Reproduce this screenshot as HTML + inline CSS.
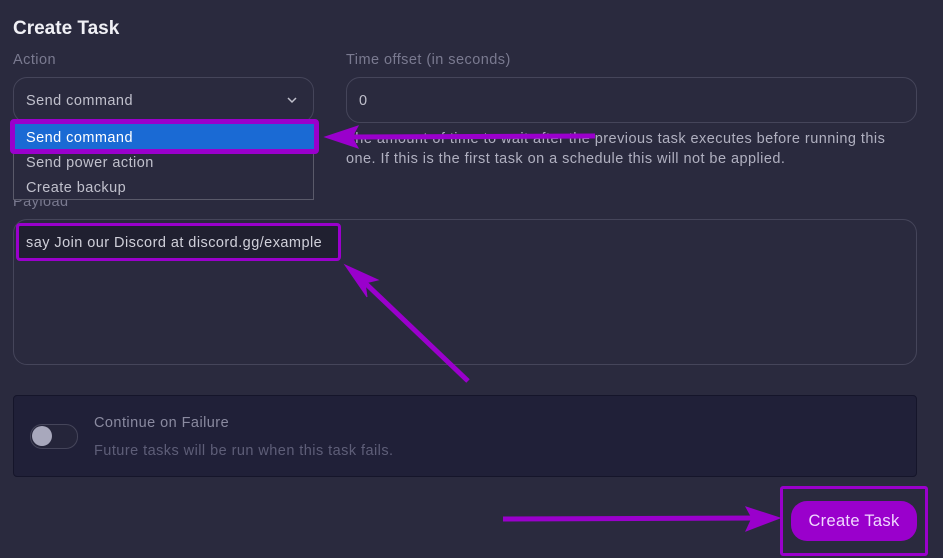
<!DOCTYPE html>
<html><head><style>
body{margin:0;width:943px;height:558px;background:#2a2a3e;font-family:"Liberation Sans",sans-serif;position:relative;overflow:hidden;color:#c8c8d4}
.a{position:absolute}
.t{font-size:14.5px;letter-spacing:0.45px}
.lbl{color:#7a7a90}
.inp{border:1px solid #45455a;border-radius:14px;box-sizing:border-box}
</style></head><body>
<div class="a" style="left:13px;top:18px;font-size:19px;font-weight:bold;color:#f0f0f5">Create Task</div>
<div class="a t lbl" style="left:13px;top:52px">Action</div>
<div class="a t lbl" style="left:346px;top:52px">Time offset (in seconds)</div>
<div class="a inp" style="left:13px;top:77px;width:301px;height:46px"></div>
<div class="a t" style="left:26px;top:93px;color:#c0c0cc">Send command</div>
<svg class="a" style="left:286px;top:95px" width="12" height="10"><path d="M2 3l4 4 4-4" stroke="#c0c0cc" stroke-width="1.5" fill="none"/></svg>
<div class="a inp" style="left:346px;top:77px;width:571px;height:46px"></div>
<div class="a t" style="left:359px;top:93px;color:#c0c0cc">0</div>
<div class="a t" style="left:346px;top:129px;line-height:20px;color:#b0b0c0;width:570px">The amount of time to wait after the previous task executes before running this one. If this is the first task on a schedule this will not be applied.</div>
<div class="a t lbl" style="left:13px;top:194px">Payload</div>
<div class="a" style="left:13px;top:122px;width:299px;height:76px;border:1px solid #5a5a6a;background:#2a2a3e"></div>
<div class="a" style="left:10px;top:119px;width:303px;height:29px;border:3px solid #9a00cc;border-radius:4px;background:#1a6ad4;box-shadow:inset 0 0 0 2px #9a00cc"></div>
<div class="a t" style="left:26px;top:130px;color:#fff">Send command</div>
<div class="a t" style="left:26px;top:155px;color:#c0c0cc">Send power action</div>
<div class="a t" style="left:26px;top:180px;color:#c0c0cc">Create backup</div>
<div class="a inp" style="left:13px;top:219px;width:904px;height:146px"></div>
<div class="a" style="left:16px;top:223px;width:319px;height:32px;border:3px solid #9a00cc;border-radius:4px;background:#202030"></div>
<div class="a t" style="left:26px;top:235px;color:#d0d0da">say Join our Discord at discord.gg/example</div>
<div class="a" style="left:13px;top:395px;width:902px;height:80px;background:#202038;border:1px solid #15152a;border-radius:4px"></div>
<div class="a" style="left:30px;top:424px;width:46px;height:23px;border:1px solid #45455a;border-radius:12px;background:#25253a"></div>
<div class="a" style="left:32px;top:426px;width:20px;height:20px;border-radius:10px;background:#a8a8bc"></div>
<div class="a t" style="left:94px;top:415px;color:#8a8aa0">Continue on Failure</div>
<div class="a t" style="left:94px;top:443px;color:#5e5e78">Future tasks will be run when this task fails.</div>
<div class="a" style="left:780px;top:486px;width:142px;height:64px;border:3px solid #9a00cc;border-radius:3px"></div>
<div class="a" style="left:791px;top:501px;width:126px;height:40px;background:#9a00cc;border-radius:16px;color:#f0d8ff;font-size:16.5px;letter-spacing:0.3px;text-align:center;line-height:40px">Create Task</div>
<svg class="a" style="left:0;top:0" width="943" height="558">
<g fill="#9a00cc" stroke="#9a00cc">
<line x1="595" y1="136" x2="350" y2="137" stroke-width="5"/>
<polygon points="325,137 358,126 352,137 358,148"/>
<line x1="468" y1="381" x2="362" y2="280" stroke-width="5"/>
<polygon points="345,265 378,280 365,283 367,297"/>
<line x1="503" y1="519" x2="760" y2="518" stroke-width="5"/>
<polygon points="780,518 746,507 752,518 746,531"/>
</g></svg>
</body></html>
